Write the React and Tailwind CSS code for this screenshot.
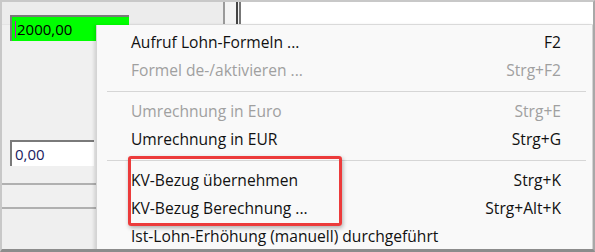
const items = [
  { label: "Aufruf Lohn-Formeln ...", key: "F2" },
  { label: "Formel de-/aktivieren ...", key: "Strg+F2", disabled: true },
  { sep: true },
  { label: "Umrechnung in Euro", key: "Strg+E", disabled: true },
  { label: "Umrechnung in EUR", key: "Strg+G" },
  { sep: true },
  { label: "KV-Bezug übernehmen", key: "Strg+K" },
  { label: "KV-Bezug Berechnung ...", key: "Strg+Alt+K" },
  { label: "Ist-Lohn-Erhöhung (manuell) durchgeführt", key: "" },
];

export default function App() {
  return (
    <div
      className="relative w-[595px] h-[252px] overflow-hidden bg-[#f0f0f0] border-l-2 border-t-2 border-r-2 border-b-[3px] border-l-[#c8c8c8] border-t-[#c8c8c8] border-r-[#a8a8a8] border-b-[#8c8c8c] text-[15.6px]"
      style={{ fontFamily: '"Open Sans", "Noto Sans", sans-serif' }}
    >
      {/* top strip */}
      <div className="flex h-[23px] border-b border-[#e4e4e4]">
        <div className="w-[221px] bg-[#ececec]" />
        <div className="w-[2px] bg-[#9a9a9a]" />
        <div className="w-[11px] bg-[#f4f4f4]" />
        <div className="w-[2px] bg-[#444]" />
        <div className="w-[1px] bg-[#f4f4f4]" />
        <div className="w-[2px] bg-[#777]" />
        <div className="flex-1 bg-white" />
      </div>

      {/* left panel */}
      <div className="absolute left-0 top-[23px] w-[96px] h-[230px]">
        <div className="h-[158px] border-r border-[#e0e0e0]" />
        <div className="h-[24px] border-t-2 border-[#b0b0b0] border-r border-r-[#e0e0e0]" />
        <div className="h-[50px] border-t-2 border-[#b0b0b0] bg-[#efefef] border-r border-r-[#e0e0e0]" />
      </div>

      {/* green field */}
      <div className="absolute left-[8px] top-[13px] w-[119px] h-[26px] bg-[#00ff00] border-t-2 border-l-2 border-[#7a7a7a] flex items-center pl-[3px] text-[15px] text-black leading-none">
        <span className="w-[1px] h-[17px] bg-[#d000d0] mr-[1px]" />
        2000,00
      </div>

      {/* zero field */}
      <div className="absolute left-[8px] top-[138px] w-[84px] h-[26px] bg-white border-t-2 border-l-2 border-[#7a7a7a] flex items-center pl-[3px] text-[15px] text-[#1a1a60] leading-none">
        0,00
      </div>

      {/* context menu */}
      <div className="absolute left-[94px] top-[23px] w-[497px] h-[240px] bg-[#f9f9f9] border-l border-r border-[#d4d4d4] shadow-[-2px_0_3px_rgba(0,0,0,0.12)] pt-[4px]">
        {items.map((it, i) =>
          it.sep ? (
            <div key={i} className="h-[13px] flex items-center pl-[10px] pr-[6px]">
              <div className="h-[1px] w-full bg-[#d6d6d6]" />
            </div>
          ) : (
            <div
              key={i}
              className={`h-[28px] flex items-center pl-[34px] pr-[31px] ${it.disabled ? "text-[#a0a0a0]" : "text-[#111]"}`}
            >
              <span className="flex-1 whitespace-nowrap">{it.label}</span>
              <span className="whitespace-nowrap">{it.key}</span>
            </div>
          )
        )}
      </div>

      {/* highlight box */}
      <div className="absolute left-[126px] top-[154px] w-[214px] h-[70px] border-[3px] border-[#ec3b3b] rounded-[3px] shadow-[1px_2px_4px_rgba(0,0,0,0.3)]" />
    </div>
  );
}
